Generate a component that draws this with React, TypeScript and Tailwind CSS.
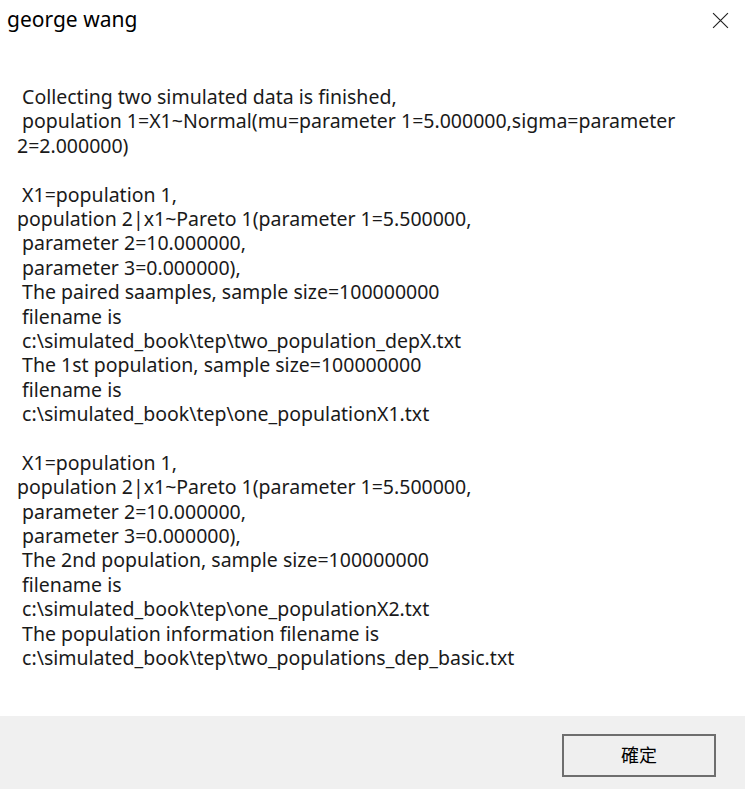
import React from "react";

const lines = [
  " Collecting two simulated data is finished,",
  " population 1=X1~Normal(mu=parameter 1=5.000000,sigma=parameter",
  "2=2.000000)",
  "",
  " X1=population 1,",
  "population 2|x1~Pareto 1(parameter 1=5.500000,",
  " parameter 2=10.000000,",
  " parameter 3=0.000000),",
  " The paired saamples, sample size=100000000",
  " filename is",
  " c:\\simulated_book\\tep\\two_population_depX.txt",
  " The 1st population, sample size=100000000",
  " filename is",
  " c:\\simulated_book\\tep\\one_populationX1.txt",
  "",
  " X1=population 1,",
  "population 2|x1~Pareto 1(parameter 1=5.500000,",
  " parameter 2=10.000000,",
  " parameter 3=0.000000),",
  " The 2nd population, sample size=100000000",
  " filename is",
  " c:\\simulated_book\\tep\\one_populationX2.txt",
  " The population information filename is",
  " c:\\simulated_book\\tep\\two_populations_dep_basic.txt",
];

export default function App() {
  return (
    <div className="w-[745px] h-[789px] bg-white flex flex-col font-['Noto_Sans','Noto_Sans_CJK_TC',sans-serif] text-[#1a1a1a]">

      {/* TITLE BAR */}

      <div className="h-[40px] flex items-center justify-between pl-[7px] pr-[16px]">
        <span className="text-[21px] text-black">george wang</span>
        <svg width="17" height="17" viewBox="0 0 16 16" className="text-[#222]">
          <path d="M1 1 L15 15 M15 1 L1 15" stroke="currentColor" strokeWidth="1.1" fill="none" />
        </svg>
      </div>

      {/* MESSAGE */}

      <div className="flex-1 pt-[45px] pl-[17px]">
        {lines.map((line, i) => (
          <div key={i} className="whitespace-pre text-[19.5px] leading-[24.4px] h-[24.4px]">
            {line}
          </div>
        ))}
      </div>

      {/* FOOTER */}

      <div className="h-[73px] bg-[#f0f0f0] flex items-start justify-end pt-[18px] pr-[29px]">
        <button className="w-[154px] h-[43px] border-2 border-[#6e6e6e] bg-[#efefef] flex items-center justify-center text-[18px] text-black">
          確定
        </button>
      </div>

    </div>
  );
}
